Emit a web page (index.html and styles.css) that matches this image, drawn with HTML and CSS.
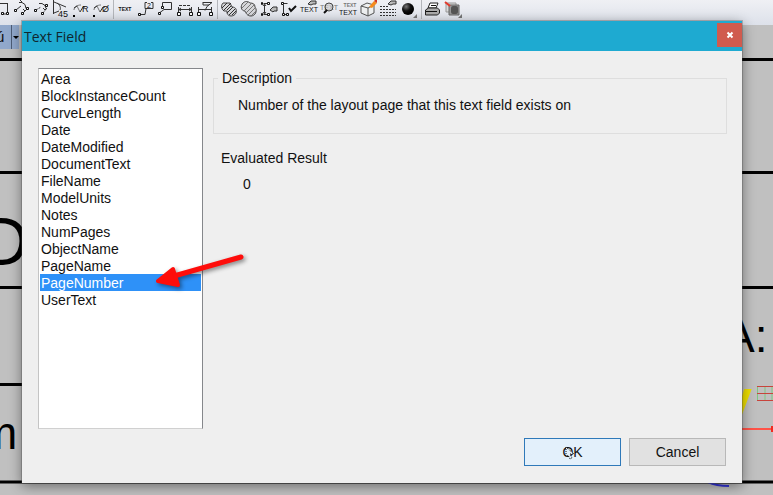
FILE: index.html
```html
<!DOCTYPE html>
<html lang="en">
<head>
<meta charset="utf-8">
<title>Text Field</title>
<link rel="stylesheet" href="styles.css">
</head>
<body>
<div class="app">
  <svg class="canvas" aria-hidden="true">
    <g class="frame-lines">
      <path d="M0 59.500H3000M0 172.500H3000M0 287.500H3000M0 384.500H400M0 482H3000"/>
    </g>
    <text class="cad-text" x="-20" y="265" font-size="68">D</text>
    <text class="cad-text" x="-21" y="449" font-size="46">m</text>
    <text class="cad-text" x="724" y="352" font-size="46">A:</text>
    <text class="cad-logo" x="752" y="422" font-size="49" text-anchor="end">V</text>
    <path d="M757.500 386v15M765 386v15M772 386v15" stroke="#7fc882" fill="none"/>
    <path d="M757 386.500h16M757 393.500h16M757 400.500h16" stroke="#c8443c" fill="none"/>
    <path d="M740 429h31" stroke="#ff5348" stroke-width="2"/>
    <path d="M771 426h3v6h-3z" fill="#f02a20"/>
    <path d="M708 482q8 4 21 4" stroke="#3434dc" stroke-width="2" fill="none"/>
  </svg>

  <div class="toolbar" role="toolbar" aria-label="Annotation">
    <button class="tool" aria-label="Ordinate"><svg viewBox="0 0 20 20"><path class="s" d="M9 3.500h8M16.500 3v10M12 14h3"/><path class="q" d="M10.500 12.500h2v2h-2zM15.500 12.500h2v2h-2z"/></svg></button>
    <button class="tool" aria-label="Angle dimension"><svg viewBox="0 0 20 20"><path class="s" d="M5 10l5-4M12 13l4-4M8 2.500h3l3 2 1 4M12 9l2 2 2-2M11 2l-2-2"/><path class="q" d="M3.500 9.500h2v2h-2zM10.500 12.500h2v2h-2zM15.500 7.500h2v2h-2z"/></svg></button>
    <button class="tool" aria-label="Arc dimension"><svg viewBox="0 0 20 20"><path class="s" stroke-dasharray="2 1" d="M5 10l5-3M12 13l4-5"/><path class="s" d="M8 3.500h3l3 2 1 3M12 8l2 2 2-2"/><path class="q" d="M3.500 9.500h2v2h-2zM10.500 12.500h2v2h-2zM14.500 4.500h2v2h-2z"/></svg></button>
    <button class="tool" aria-label="45 degree dimension"><svg viewBox="0 0 20 20"><path class="s" d="M2.500 0v14M3 2l12 5M3 13l5-2M6 3c3 2 4 5 3 7"/><text x="7" y="17" class="t8">45</text></svg></button>
    <button class="tool" aria-label="Radius dimension"><svg viewBox="0 0 20 20"><path class="l" d="M3 10c0-3 3-5 7-5M6 6l3 6"/><path class="s" d="M9 12l3-5h2M3 8l3-2"/><path d="M2 15h2v2H2z"/><text x="11" y="12" class="t8">R</text></svg></button>
    <button class="tool" aria-label="Diameter dimension"><svg viewBox="0 0 20 20"><path class="l" d="M3 10c0-3 3-5 7-5M6 6l3 6"/><path class="s" d="M9 12l3-5h2M3 8l3-2"/><path d="M2 15h2v2H2z"/><text x="11" y="12" class="t8">Ø</text></svg></button>
    <span class="sep"></span>
    <button class="tool" aria-label="Text"><svg viewBox="0 0 20 20"><text x="10" y="11" class="t5" text-anchor="middle">TEXT</text></svg></button>
    <button class="tool" aria-label="Leader"><svg viewBox="0 0 20 20"><path class="s" d="M12 2.500h-2v6h2M16 2.500h2v6h-2M5 14.500h5l1-6h6"/><path class="q" d="M3.500 13.500h2v2h-2z"/><text x="14" y="8" class="t7" text-anchor="middle">2</text></svg></button>
    <button class="tool" aria-label="Callout"><svg viewBox="0 0 20 20"><path class="s" d="M7.500 7V2.500h9v7H9l-4 3"/><path class="q" d="M3.500 12.500h2v2h-2zM6.500 6.500h2v2h-2z"/></svg></button>
    <button class="tool" aria-label="Linear dimension"><svg viewBox="0 0 20 20"><path class="s" d="M3.500 7v6M16.500 7v6M4 9.500h12M6 8l-2 1.500 2 1.500M14 8l2 1.500-2 1.500"/><path class="s" stroke-dasharray="3 1" d="M4 5.500h12"/><path class="q" d="M2.500 12.500h3v3h-3zM14.500 12.500h3v3h-3z"/></svg></button>
    <button class="tool" aria-label="Edit dimension"><svg viewBox="0 0 20 20"><path class="s" d="M3.500 7v6M16.500 7v6M4 9.500h12M8 2.500h9l-5 4-2 4M8 2v3h6"/><path class="q" d="M2.500 12.500h3v3h-3zM14.500 12.500h3v3h-3z"/></svg></button>
    <span class="sep"></span>
    <button class="tool" aria-label="Hatch"><svg viewBox="0 0 20 20"><path class="g" d="M4 3h7l2 4c4 0 5 3 4 6-2 4-8 4-9 0V11H5C2 9 2 5 4 3z"/><path class="s" d="M3 8l5-5M4 11l8-8M8 10l4-4M8 13l6-6M10 15l6-6M13 15l4-4"/></svg></button>
    <button class="tool" aria-label="Hatch boundary"><svg viewBox="0 0 20 20"><path class="g" d="M4 3c2-2 5-2 7 0 3 0 5 1 5 4 3 4 0 9-4 9-4 0-5-3-6-5-4 0-5-5-2-8z"/><path class="l" d="M3 8l6-6M5 11l7-7M7 13l8-8M9 15l8-8M12 16l5-5"/></svg></button>
    <button class="tool" aria-label="Rotate dimension"><svg viewBox="0 0 20 20"><path class="s" d="M4.500 3.500h4M5.500 5v8M4.500 14.500h4M4 6l1.500-2L7 6M4 12l1.500 2L7 12"/><path class="q" d="M2.500 2.500h1v2h-1zM2.500 13.500h1v2h-1zM8.500 2.500h2v2h-2zM8.500 13.500h2v2h-2z"/><path d="M11 10l3-3h4v4h-3l-1 1z" fill="#bbb" stroke="#333"/></svg></button>
    <button class="tool" aria-label="Accept dimension"><svg viewBox="0 0 20 20"><path class="s" d="M4.500 3.500h4M4.500 5v8M4 14.500h4"/><path class="q" d="M2.500 2.500h2v2h-2zM3.500 13.500h2v2h-2zM7.500 13.500h2v2h-2z"/><path class="b" d="M10 8l2 3 5-5"/></svg></button>
    <button class="tool" aria-label="Rotate text"><svg viewBox="0 0 20 20"><path d="M9 4l3-3h5v3h-3l-2 1z" fill="#bbb" stroke="#333"/><text x="10" y="12" class="t7" text-anchor="middle">TEXT</text></svg></button>
    <button class="tool" aria-label="Find text"><svg viewBox="0 0 20 20"><text x="10" y="10" class="t7 dim" text-anchor="middle">TEXT</text><circle cx="10" cy="7" r="4" class="g"/><path class="b" d="M8 10l-3 3"/></svg></button>
    <button class="tool" aria-label="Scale text"><svg viewBox="0 0 20 20"><text x="11" y="7" class="t5 dim" text-anchor="middle">TEXT</text><text x="9" y="15" class="t7" text-anchor="middle">TEXT</text></svg></button>
    <button class="tool" aria-label="Edit block"><svg viewBox="0 0 20 20"><path d="M2 6l6-3 7 2v8l-6 3-7-3z" fill="#eef0f1" stroke="#555"/><path d="M2 6l7 2 6-3M9 8v8" fill="none" stroke="#555"/><path d="M10 7l5-6 3 2-5 5z" fill="#f58b1d"/><path d="M15 1l3 2V0h-2z" fill="#d03420"/></svg></button>
    <button class="tool" aria-label="Line types"><svg viewBox="0 0 20 20"><path d="M9 4l3-3h5v3h-3l-2 1z" fill="#bbb" stroke="#333"/><path d="M1 6.500h8M1 9.500h16M1 12.500h16M1 15.500h16" fill="none" stroke="#333" stroke-dasharray="2 1"/></svg></button>
    <button class="tool" aria-label="Dot"><svg viewBox="0 0 20 20"><defs><radialGradient id="ball" cx=".35" cy=".3" r=".6"><stop offset="0" stop-color="#777"/><stop offset=".6" stop-color="#111"/><stop offset="1" stop-color="#000"/></radialGradient></defs><circle cx="9" cy="9" r="6" fill="url(#ball)"/><path class="corner" d="M18 14v4h-4z"/></svg></button>
    <span class="sep"></span>
    <button class="tool" aria-label="Print"><svg viewBox="0 0 20 20"><path d="M5 8l2-5h8l-2 5z" fill="#fff" stroke="#222"/><path d="M2.500 10l3-2h9l2 2v3l-2 2h-12z" fill="#aaa" stroke="#222"/><path d="M3 11.500h11M8 5.500h5" stroke="#111"/></svg></button>
    <button class="tool" aria-label="Copy layout"><svg viewBox="0 0 20 20"><path d="M3 3h10v9H3z" fill="#d9d9d9" stroke="#999"/><path d="M6 5h10v10H6z" fill="#999" stroke="#666"/><rect x="8" y="6" width="7" height="8" rx="2" fill="#555"/><path d="M2 2l5 4" stroke="#e23a2c" stroke-width="2"/><path class="corner" d="M19 14v4h-4z"/></svg></button>
  </div>
  <button class="picker"><span class="picker-label">ú</span><span class="picker-arrow"></span></button>

  <form class="dialog" role="dialog" aria-labelledby="title">
    <header class="titlebar">
      <h1 id="title">Text Field</h1>
      <button type="button" class="close" aria-label="Close"><svg viewBox="0 0 8 8"><path d="M1.500 1.500l5 5M6.500 1.500l-5 5"/></svg></button>
    </header>
    <div class="content">
      <select class="fields" size="14" aria-label="Fields">
        <option>Area</option>
        <option>BlockInstanceCount</option>
        <option>CurveLength</option>
        <option>Date</option>
        <option>DateModified</option>
        <option>DocumentText</option>
        <option>FileName</option>
        <option>ModelUnits</option>
        <option>Notes</option>
        <option>NumPages</option>
        <option>ObjectName</option>
        <option>PageName</option>
        <option selected>PageNumber</option>
        <option>UserText</option>
      </select>
      <div class="details">
        <fieldset class="description">
          <legend>Description</legend>
          <p>Number of the layout page that this text field exists on</p>
        </fieldset>
        <section class="result">
          <h2>Evaluated Result</h2>
          <output>0</output>
        </section>
        <footer class="actions">
          <button type="button" class="btn primary">OK</button>
          <button type="button" class="btn">Cancel</button>
        </footer>
      </div>
    </div>
    <svg class="arrow" viewBox="0 0 96 40" aria-hidden="true"><path d="M91 8L24 27" stroke="#fe0d0b" stroke-width="5" stroke-linecap="round"/><path d="M8 32L23 20L28 36Z" fill="#fe0d0b" stroke="#fe0d0b" stroke-width="4" stroke-linejoin="round"/></svg>
    <svg class="cursor" viewBox="0 0 10 14" aria-hidden="true"><path d="M1 1v10l2-2 2 4 2-1-2-4h4z" fill="#e3f0fb" stroke="#111" stroke-dasharray="1 1"/></svg>
  </form>
</div>
</body>
</html>
```
FILE: styles.css
```css
* { box-sizing: border-box; }

body {
  margin: 0;
  font: 14px/17px "Liberation Sans", Arial, sans-serif;
  color: #111;
}

h1, h2, p { margin: 0; font-weight: normal; }
h2 { font-size: 14px; }
button { font: inherit; color: inherit; padding: 0; }

.app {
  position: relative;
  min-height: 100vh;
  overflow: hidden;
  background: #c0c0c0;
}

.canvas {
  position: absolute;
  inset: 0;
  width: 100%;
  height: 100%;
}
.frame-lines { stroke: #000; stroke-width: 3; }
.cad-text { font-family: "Liberation Sans", sans-serif; fill: #000; }
.cad-logo { font-family: "Liberation Sans", sans-serif; font-weight: bold; fill: #efe000; }

.toolbar {
  position: relative;
  display: flex;
  height: 25px;
  padding-right: 8px;
  background: linear-gradient(#eff0f4, #dde1ea);
}
.tool {
  flex: none;
  width: 20px;
  height: 20px;
  border: 0;
  background: none;
}
.tool:first-child { margin-left: -9px; }
.tool svg { display: block; width: 20px; height: 20px; }
.sep {
  flex: none;
  width: 4px;
  height: 19px;
  background: linear-gradient(#b4b6bb, #b4b6bb) center / 1px 100% no-repeat;
}
.s { fill: none; stroke: #333; }
.l { fill: none; stroke: #777; }
.g { fill: #c9cacc; fill-opacity: .6; stroke: #444; }
.q { fill: #fff; stroke: #111; }
.b { fill: none; stroke: #111; stroke-width: 2; }
.corner { fill: #777; }
.t5, .t7, .t8 { font-family: "Liberation Sans", sans-serif; fill: #111; }
.t5 { font-size: 5px; font-weight: bold; }
.t7 { font-size: 7px; }
.t8 { font-size: 9px; }
.t7.dim, .t5.dim { fill: #777; }

.picker {
  position: relative;
  display: flex;
  align-items: center;
  width: 19px;
  height: 24px;
  border: 0;
  background: #91a8cb;
  font-size: 15px;
}
.picker-label {
  width: 12px;
  height: 24px;
  line-height: 24px;
  text-indent: -4px;
  text-align: left;
  border-right: 1px solid #4d5c75;
}
.picker-arrow {
  margin-left: 1px;
  border: 3px solid transparent;
  border-top-color: #000;
  border-bottom: 0;
}

.dialog {
  position: absolute;
  inset: 21px 31px 12px 22px;
  display: flex;
  flex-direction: column;
  background: #efefef;
  box-shadow: 0 0 0 1px rgba(70, 70, 70, .3), 0 3px 12px rgba(0, 0, 0, .45);
}
.titlebar {
  display: flex;
  justify-content: space-between;
  height: 30px;
  padding: 2px 0 0 2px;
  background: #1eaad1;
}
.titlebar h1 { font: 14px/27px "Open Sans", sans-serif; color: #10262e; }
.close {
  display: grid;
  place-items: center;
  width: 25px;
  height: 24px;
  border: 0;
  background: #d05b4e;
}
.close svg { width: 8px; height: 8px; }
.close path { stroke: #fff; stroke-width: 2; }

.content {
  flex: 1;
  display: flex;
  gap: 10px;
  padding: 17px 15px 17px 16px;
}
.fields {
  width: 165px;
  margin-bottom: 37px;
  padding: 1px 0;
  border: 1px solid #85878b;
  border-left-color: #c4c4c4;
  border-bottom-color: #d0d0d0;
  border-radius: 0;
  outline: 0;
  background: #fff;
  color: #111;
  font: inherit;
  overflow: hidden;
}
.fields option {
  height: 17px;
  min-height: 17px;
  padding: 1px 0 0 1px;
  margin: 0 1px;
  line-height: 16px;
}
.fields option:checked {
  background: #2e91f8 linear-gradient(#2e91f8, #2e91f8);
  color: #fff;
}
.details {
  flex: 1;
  display: flex;
  flex-direction: column;
}
.description {
  height: 64px;
  margin: 2px 0 0;
  padding: 10px 24px;
  border: 1px solid #dedede;
}
.description legend { margin-left: -20px; padding: 0 4px; }
.result { padding: 16px 8px; }
.result output { display: block; margin: 9px 22px; }
.actions {
  display: flex;
  justify-content: flex-end;
  gap: 8px;
  margin-top: auto;
  padding-right: 1px;
}
.btn {
  width: 97px;
  height: 28px;
  border: 1px solid #b8b8b8;
  background: #e1e1e1;
}
.btn.primary { border-color: #2f79b9; background: #e3f0fb; }

.arrow {
  position: absolute;
  left: 128px;
  top: 228px;
  width: 96px;
  height: 40px;
  filter: drop-shadow(2px 2px 2px rgba(0, 0, 0, .45));
}
.cursor {
  position: absolute;
  right: 167px;
  bottom: 23px;
  width: 10px;
  height: 14px;
}
```
